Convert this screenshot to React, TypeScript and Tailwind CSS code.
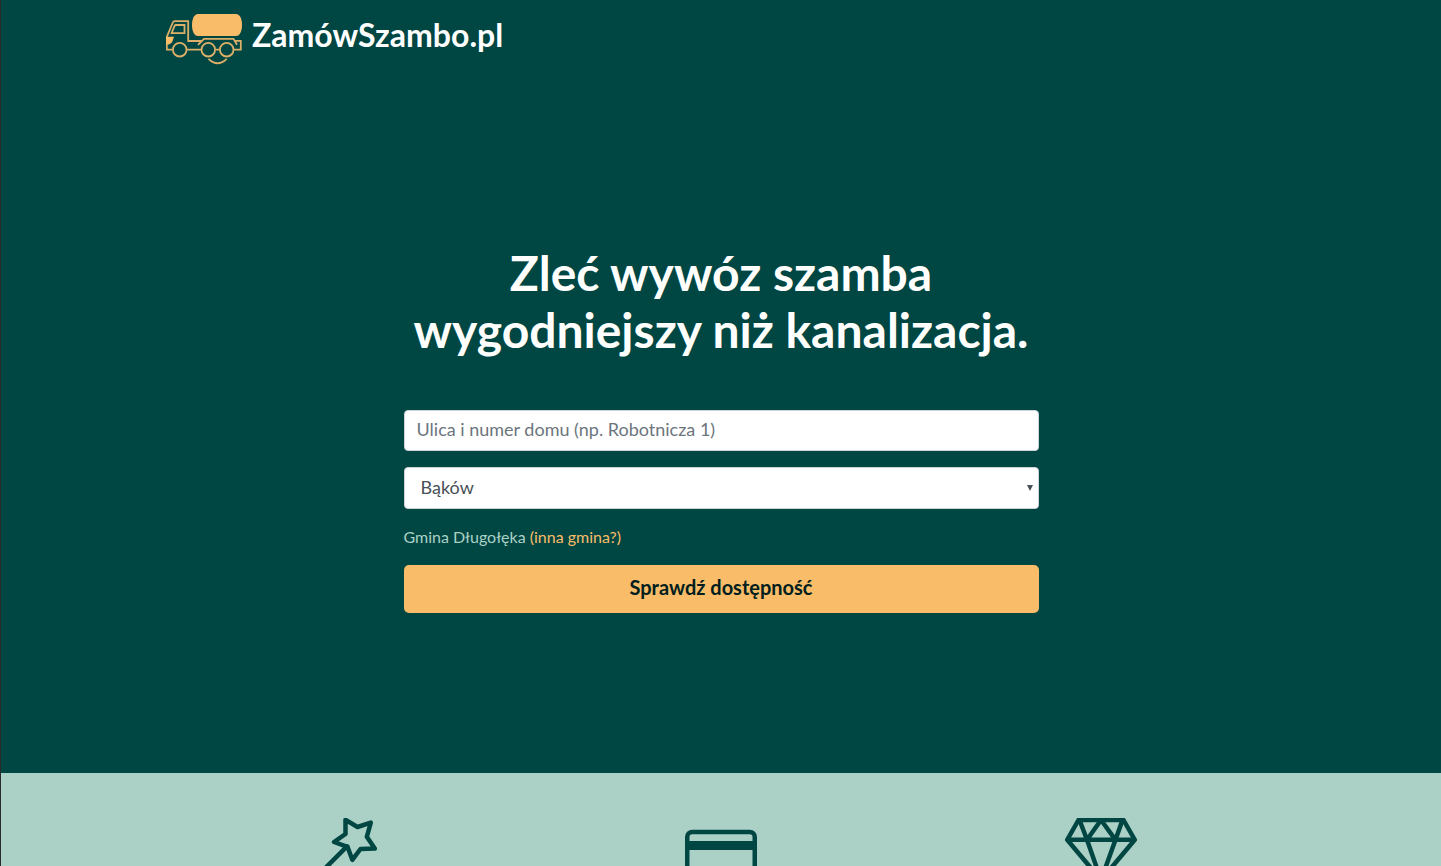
import React from "react";

const towns = ["Bąków", "Bielawa", "Borowa", "Brzezia Łąka", "Długołęka", "Kiełczów", "Mirków"];

export default function App() {
  return (
    <div className="min-h-screen border-l border-[#2b2b2b] bg-[#abd1c6] font-['Lato','Open_Sans',sans-serif] text-base text-[#abd1c6]">
      <div className="bg-[#004643] pb-40">
        <header className="mx-auto max-w-[1140px] px-[15px] pt-3">
          <a href="/" className="inline-flex items-start gap-2.5 text-white">
            <TruckLogo />
            <span className="text-[32px] leading-[46px] font-bold">ZamówSzambo.pl</span>
          </a>
        </header>

        <main className="mx-auto max-w-[1140px] pt-[172px]">
          <div className="mx-auto px-[15px] md:w-7/12">
            <h1 className="text-center text-5xl leading-[57px] font-bold text-[#fffffe]">
              Zleć wywóz szamba
              <br />
              wygodniejszy niż kanalizacja.
            </h1>

            <form className="mt-[52px]" onSubmit={(e) => e.preventDefault()}>
              <input
                type="text"
                aria-label="Ulica i numer domu"
                placeholder="Ulica i numer domu (np. Robotnicza 1)"
                className="block h-[41px] w-full rounded border border-[#ced4da] bg-white px-3 pb-1 text-lg text-[#495057] outline-none placeholder:text-[#6c757d]"
              />

              <div className="relative mt-4">
                <select
                  aria-label="Miejscowość"
                  className="block h-[42px] w-full appearance-none rounded border border-[#ced4da] bg-white px-4 pb-0.5 text-lg text-[#495057] outline-none"
                >
                  {towns.map((town) => (
                    <option key={town}>{town}</option>
                  ))}
                </select>
                <svg
                  className="pointer-events-none absolute top-[18px] right-1.5"
                  width="6"
                  height="6"
                  viewBox="0 0 6 6"
                  fill="#495057"
                >
                  <path d="M0 0h6L3 6z" />
                </svg>
              </div>

              <p className="mt-4 leading-6">
                Gmina Długołęka{" "}
                <a href="#gmina" className="text-[#f9bc68]">
                  (inna gmina?)
                </a>
              </p>

              <button
                type="submit"
                className="mt-4 h-12 w-full rounded-[5px] bg-[#f9bc68] pb-1 text-xl font-bold text-[#001e1d]"
              >
                Sprawdź dostępność
              </button>
            </form>
          </div>
        </main>
      </div>

      {/* features */}
      <section className="mx-auto grid max-w-[1140px] grid-cols-3 justify-items-center pt-[45px] text-[#004643]">
        <WandIcon />
        <CardIcon />
        <DiamondIcon />
      </section>
    </div>
  );
}

function TruckLogo() {
  return (
    <svg width="76" height="54" viewBox="0 -2 76 54" fill="none" stroke="#dcb068" strokeWidth="1.8">
      {/* tank */}
      <path
        d="M32 0H70C74 0 76 5 76 11S74 22 70 22H32C28 22 26 17 26 11S28 0 32 0Z"
        fill="#f9bc68"
        stroke="none"
      />
      {/* cab */}
      <path d="M6 35.7H.8V23L6.8 8.5Q7.3 7.2 8.8 7.2H22.2V27H36" />
      <path d="M10 11H18.5V19.2H5.6L8.5 12Q9 11 10 11Z" />
      <path d="M0 22.8H8L6 28.5L3 30.5H0Z" fill="#f9bc68" stroke="none" />
      {/* chassis */}
      <path d="M21 35.7H35M50 35.7H53.5M32 30.8L38 24.8H67.5L71 30.8M68.5 26.8H74.8V35.7H67.5" />
      <circle cx="13.7" cy="35.7" r="6.8" />
      <circle cx="42.3" cy="35.7" r="6.8" />
      <circle cx="60.7" cy="35.7" r="6.8" />
      <path d="M42.5 44.8Q51.5 53.6 60.8 44.8" />
    </svg>
  );
}

function WandIcon() {
  return (
    <svg
      width="72"
      height="72"
      viewBox="0 0 72 72"
      fill="none"
      stroke="currentColor"
      strokeWidth="4.5"
      strokeLinejoin="round"
      strokeLinecap="round"
    >
      <path d="M40.5 1.8L52.5 9L65.8 4.6L61.8 18.8L69.8 30.6L55.5 31L47.3 41.8L42.5 28.8L29 24L40.5 16Z" />
      <path d="M42 28.4L2 68.4" />
    </svg>
  );
}

function CardIcon() {
  return (
    <svg width="72" height="72" viewBox="0 0 72 72" fill="none" stroke="currentColor" strokeWidth="4.5">
      <rect x="2.25" y="14" width="67.5" height="44" rx="5" />
      <path d="M2 27.5H70" strokeWidth="9" />
    </svg>
  );
}

function DiamondIcon() {
  return (
    <svg
      width="72"
      height="72"
      viewBox="0 0 72 72"
      fill="none"
      stroke="currentColor"
      strokeWidth="4.5"
      strokeLinejoin="round"
    >
      <path d="M13.5 2H58.5L69.8 21.8L36 62L2.2 21.8Z" />
      <path d="M2 21.8H70M14.5 2L22 21.8L36 2L50.5 21.8L57.5 2M22 21.8L36 62L50.5 21.8" />
    </svg>
  );
}
